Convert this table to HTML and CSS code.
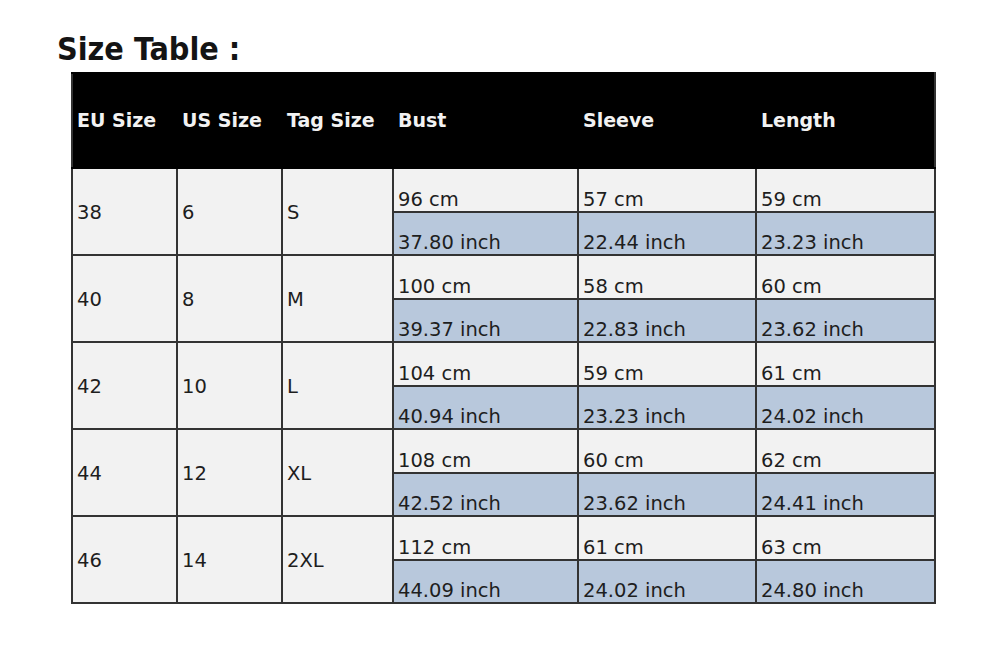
FILE: index.html
```html
<!DOCTYPE html>
<html>
<head>
<meta charset="utf-8">
<link rel="stylesheet" href="styles.css">
</head>
<body>
<div class="page">
  <h1 class="title">Size Table :</h1>
  <table class="sizes">
    <colgroup>
      <col class="c1"><col class="c2"><col class="c3"><col class="c4"><col class="c5"><col class="c6">
    </colgroup>
    <thead>
      <tr class="head">
        <th>EU Size</th><th>US Size</th><th>Tag Size</th><th>Bust</th><th>Sleeve</th><th>Length</th>
      </tr>
    </thead>
    <tbody>
      <tr class="cm"><td rowspan="2" class="key">38</td><td rowspan="2" class="key">6</td><td rowspan="2" class="key">S</td><td>96 cm</td><td>57 cm</td><td>59 cm</td></tr>
      <tr class="inch"><td>37.80 inch</td><td>22.44 inch</td><td>23.23 inch</td></tr>
      <tr class="cm"><td rowspan="2" class="key">40</td><td rowspan="2" class="key">8</td><td rowspan="2" class="key">M</td><td>100 cm</td><td>58 cm</td><td>60 cm</td></tr>
      <tr class="inch"><td>39.37 inch</td><td>22.83 inch</td><td>23.62 inch</td></tr>
      <tr class="cm"><td rowspan="2" class="key">42</td><td rowspan="2" class="key">10</td><td rowspan="2" class="key">L</td><td>104 cm</td><td>59 cm</td><td>61 cm</td></tr>
      <tr class="inch"><td>40.94 inch</td><td>23.23 inch</td><td>24.02 inch</td></tr>
      <tr class="cm"><td rowspan="2" class="key">44</td><td rowspan="2" class="key">12</td><td rowspan="2" class="key">XL</td><td>108 cm</td><td>60 cm</td><td>62 cm</td></tr>
      <tr class="inch"><td>42.52 inch</td><td>23.62 inch</td><td>24.41 inch</td></tr>
      <tr class="cm"><td rowspan="2" class="key">46</td><td rowspan="2" class="key">14</td><td rowspan="2" class="key">2XL</td><td>112 cm</td><td>61 cm</td><td>63 cm</td></tr>
      <tr class="inch"><td>44.09 inch</td><td>24.02 inch</td><td>24.80 inch</td></tr>
    </tbody>
  </table>
</div>
</body>
</html>
```
FILE: styles.css
```css
html, body {
  margin: 0;
  padding: 0;
  background: #ffffff;
}

.page {
  padding: 33px 0 0 57px;
  font-family: "DejaVu Sans", Verdana, sans-serif;
  color: #1e1e1e;
}

.title {
  margin: 0 0 7px 0;
  font-family: "DejaVu Sans Condensed", "DejaVu Sans", sans-serif;
  font-weight: bold;
  font-size: 32px;
  line-height: 32px;
  color: #141414;
}

.sizes {
  margin-left: 14px;
  border-collapse: collapse;
  table-layout: fixed;
  width: 863px;
  font-size: 19.5px;
}

.c1 { width: 105px; }
.c2 { width: 105px; }
.c3 { width: 111px; }
.c4 { width: 185px; }
.c5 { width: 178px; }
.c6 { width: 179px; }

.head {
  height: 95px;
  background: #000000;
}

.head th {
  color: #f2f2f2;
  font-weight: bold;
  font-size: 19px;
  text-align: left;
  padding: 0 0 1px 4px;
  vertical-align: middle;
  border: 2px solid #000000;
  white-space: nowrap;
}

.head th:first-child {
  border-left-color: #333333;
}

.head th:last-child {
  border-right-color: #333333;
}

.sizes td {
  border: 2px solid #333333;
  padding: 0 0 0 4px;
  line-height: 22px;
  white-space: nowrap;
}

.cm { height: 44px; }
.inch { height: 43px; }

.cm td {
  background: #f2f2f2;
  vertical-align: bottom;
}

.inch td {
  background: #b8c8dc;
  vertical-align: bottom;
}

.sizes td.key {
  background: #f2f2f2;
  vertical-align: middle;
  padding-top: 3px;
}
```
